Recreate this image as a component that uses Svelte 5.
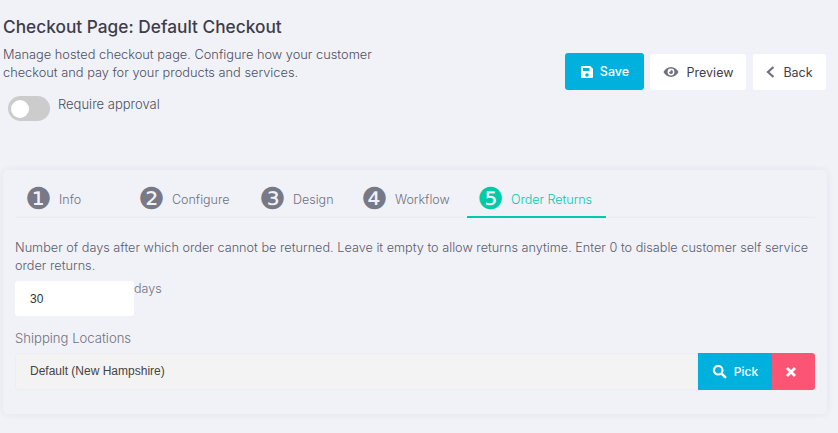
<script>
	const tabs = [
		{ num: '❶', label: 'Info', width: 113 },
		{ num: '❷', label: 'Configure', width: 121 },
		{ num: '❸', label: 'Design', width: 102 },
		{ num: '❹', label: 'Workflow', width: 116 },
		{ num: '❺', label: 'Order Returns', width: 139, active: true }
	];
</script>

<div class="page">
	<header class="top">
		<div class="intro">
			<h1>Checkout Page: Default Checkout</h1>
			<p>Manage hosted checkout page. Configure how your customer checkout and pay for your products and services.</p>
			<div class="approval">
				<span class="toggle"><span class="knob"></span></span>
				<span class="approval-label">Require approval</span>
			</div>
		</div>
		<div class="actions">
			<button class="btn save">
				<svg width="14" height="14" viewBox="0 0 14 14"><path fill="#fff" fill-rule="evenodd" d="M2 1h8.200L13 3.800V12a1 1 0 0 1-1 1H2a1 1 0 0 1-1-1V2a1 1 0 0 1 1-1zm1 2v3h6.500V3zm4 5.200a1.800 1.800 0 1 0 0 3.600 1.800 1.800 0 0 0 0-3.600z"/></svg>
				Save
			</button>
			<button class="btn preview">
				<svg width="16" height="12" viewBox="0 0 16 12"><path fill="#6f7180" fill-rule="evenodd" d="M8 1c3.400 0 6 2.300 7.500 5-1.500 2.700-4.100 5-7.500 5S2 8.700.5 6C2 3.300 4.600 1 8 1zm0 1.600a3.400 3.400 0 1 0 0 6.800 3.400 3.400 0 0 0 0-6.800zm0 1.400a2 2 0 1 1-2 2c.8.300 1.900-.9 2-2z"/></svg>
				Preview
			</button>
			<button class="btn back">
				<svg width="9" height="12" viewBox="0 0 9 12"><path fill="none" stroke="#6f7180" stroke-width="2.200" d="M7.500 1 2 6l5.500 5"/></svg>
				Back
			</button>
		</div>
	</header>

	<section class="card">
		<nav class="tabs">
			{#each tabs as tab}
				<div class="tab" class:active={tab.active} style="width: {tab.width}px">
					<span class="num">{tab.num}</span>
					<span>{tab.label}</span>
				</div>
			{/each}
		</nav>

		<p class="hint">Number of days after which order cannot be returned. Leave it empty to allow returns anytime. Enter 0 to disable customer self service order returns.</p>
		<div class="days">
			<input type="text" value="30" />
			<span>days</span>
		</div>

		<div class="field-label">Shipping Locations</div>
		<div class="picker">
			<div class="picked">Default (New Hampshire)</div>
			<button class="pick">
				<svg width="15" height="15" viewBox="0 0 15 15"><circle cx="6.200" cy="6.200" r="4.300" fill="none" stroke="#fff" stroke-width="2.200"/><path stroke="#fff" stroke-width="2.600" stroke-linecap="round" d="M9.800 9.800l3.400 3.400"/></svg>
				Pick
			</button>
			<button class="clear">
				<svg width="10" height="10" viewBox="0 0 10 10"><path stroke="#fff" stroke-width="2.800" d="M1 1l8 8M9 1l-8 8"/></svg>
			</button>
		</div>
	</section>
</div>

<style>
	:global(body) {
		background: #f1f2f8;
	}

	.page {
		height: 433px;
		overflow: hidden;
		box-sizing: border-box;
		background: #f1f2f8;
		font-family: Inter, "Noto Sans", sans-serif;
		color: #6f7180;
	}

	.top {
		display: flex;
		justify-content: space-between;
		height: 170px;
		padding: 0 12px 0 3px;
	}

	.intro {
		width: 400px;
	}

	h1 {
		margin: 15px 0 0;
		font-size: 17.300px;
		line-height: 24px;
		font-weight: 500;
		color: #3f3d4b;
	}

	.intro p {
		margin: 7px 0 0;
		font-size: 12.800px;
		line-height: 18px;
		font-weight: 300;
		color: #4d4f5f;
	}

	.approval {
		display: flex;
		align-items: flex-start;
		gap: 8px;
		margin: 14px 0 0 5px;
	}

	.toggle {
		display: flex;
		align-items: center;
		box-sizing: border-box;
		width: 42px;
		height: 25px;
		padding-left: 3px;
		border-radius: 13px;
		background: #cccccc;
	}

	.knob {
		display: block;
		width: 18px;
		height: 18px;
		border-radius: 50%;
		background: #fff;
	}

	.approval-label {
		font-size: 13px;
		line-height: 17px;
		font-weight: 300;
		color: #4d4f5f;
	}

	.actions {
		display: flex;
		align-items: flex-start;
		gap: 6px;
		margin-top: 53px;
	}

	.btn {
		display: flex;
		align-items: center;
		justify-content: center;
		gap: 8px;
		height: 36px;
		margin-top: 1px;
		border: 0;
		border-radius: 3px;
		background: #fff;
		font: 400 12.500px Inter, sans-serif;
		color: #3f3d4b;
	}

	.save {
		gap: 6px;
		width: 79px;
		height: 37px;
		margin-top: 0;
		background: #00b1dd;
		color: #fff;
		font-weight: 500;
	}

	.preview {
		width: 96px;
	}

	.back {
		width: 73px;
		margin-left: 1px;
	}

	.card {
		box-sizing: border-box;
		height: 244px;
		margin: 0 11px 0 3px;
		padding: 14px 12px 0;
		border-radius: 6px;
		background: #f1f2f8;
		box-shadow: 0 0 8px rgba(60, 60, 90, 0.07);
	}

	.tabs {
		display: flex;
		height: 33px;
		border-bottom: 1px solid #ebecf2;
	}

	.tab {
		display: flex;
		align-items: flex-start;
		gap: 7px;
		box-sizing: border-box;
		height: 34px;
		padding-left: 10px;
		font-size: 12.500px;
		font-weight: 300;
		line-height: 31px;
		color: #6f7180;
	}

	.num {
		font-family: "DejaVu Sans", sans-serif;
		font-size: 29.500px;
		line-height: 30px;
		color: #787986;
	}

	.tab.active {
		border-bottom: 2px solid #00cba7;
		color: #00cba7;
	}

	.tab.active .num {
		color: #00cba7;
	}

	.hint {
		margin: 21px 0 0;
		font-size: 12.700px;
		line-height: 18px;
		font-weight: 300;
		color: #5a5c6c;
	}

	.days {
		display: flex;
		align-items: flex-start;
		margin-top: 6px;
	}

	.days input {
		box-sizing: border-box;
		width: 119px;
		height: 35px;
		padding: 0 15px;
		border: 0;
		border-radius: 3px;
		background: #fff;
		font: 12px "Liberation Sans", sans-serif;
		color: #333;
	}

	.days span {
		font-size: 12.500px;
		line-height: 16px;
		font-weight: 300;
	}

	.field-label {
		margin-top: 14px;
		font-size: 13.100px;
		line-height: 16px;
		font-weight: 300;
	}

	.picker {
		display: flex;
		height: 37px;
		margin-top: 7px;
	}

	.picked {
		flex: 1;
		padding-left: 14px;
		border: 1px solid #eeeef2;
		border-radius: 3px 0 0 3px;
		background: #f3f3f4;
		font: 12px/35px "Liberation Sans", sans-serif;
		color: #444;
	}

	.pick,
	.clear {
		display: flex;
		align-items: center;
		justify-content: center;
		border: 0;
		color: #fff;
	}

	.pick {
		gap: 7px;
		width: 74px;
		background: #00b1dd;
		font: 500 12px Inter, sans-serif;
	}

	.clear {
		width: 43px;
		padding: 0 5px 0 0;
		border-radius: 0 3px 3px 0;
		background: #fb5474;
	}
</style>
